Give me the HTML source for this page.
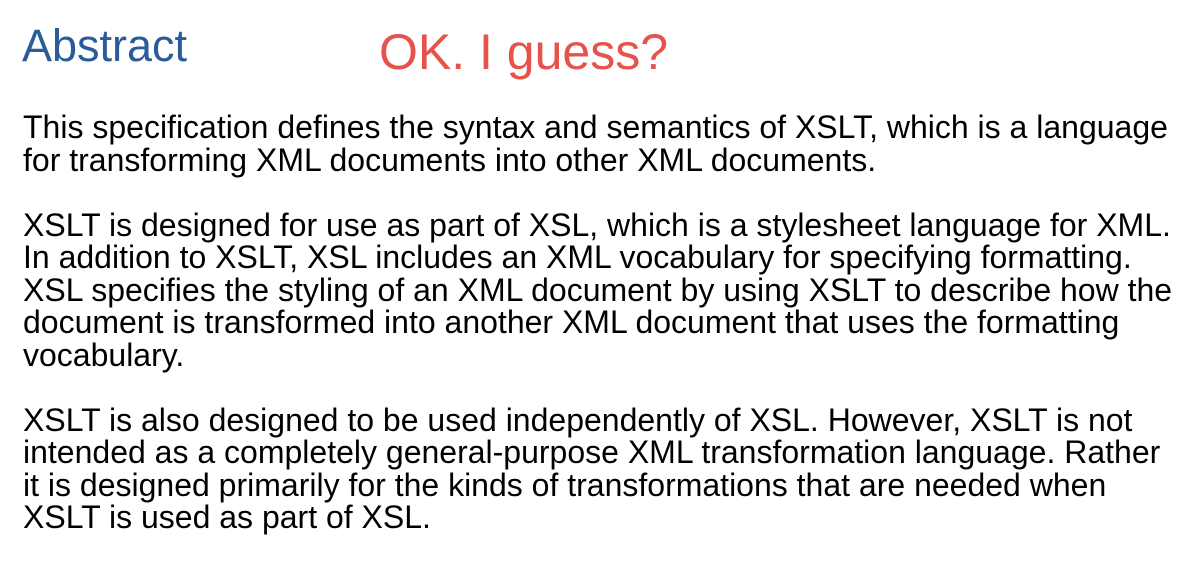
<!DOCTYPE html>
<html><head><meta charset="utf-8"><style>
html,body{margin:0;padding:0;background:#fff;width:1186px;height:572px;overflow:hidden}
body{font-family:"Liberation Sans",Arial,sans-serif;position:relative}
.h{position:absolute;left:22px;top:20px;font-size:45px;line-height:52px;color:#2a5c9a;margin:0;font-weight:normal}
.ok{position:absolute;left:379px;top:24px;font-size:50px;line-height:56px;color:#e5534b}
.t{position:absolute;left:23px;top:111px;width:1170px;font-size:32px;line-height:32.5px;color:#000;white-space:nowrap}
.t p{margin:0 0 32.5px 0}
</style></head><body>
<div class="h">Abstract</div>
<div class="ok">OK. I guess?</div>
<div class="t">
<p>This specification defines the syntax and semantics of XSLT, which is a language<br>for transforming XML documents into other XML documents.</p>
<p>XSLT is designed for use as part of XSL, which is a stylesheet language for XML.<br>In addition to XSLT, XSL includes an XML vocabulary for specifying formatting.<br>XSL specifies the styling of an XML document by using XSLT to describe how the<br>document is transformed into another XML document that uses the formatting<br>vocabulary.</p>
<p>XSLT is also designed to be used independently of XSL. However, XSLT is not<br>intended as a completely general-purpose XML transformation language. Rather<br>it is designed primarily for the kinds of transformations that are needed when<br>XSLT is used as part of XSL.</p>
</div>
</body></html>
